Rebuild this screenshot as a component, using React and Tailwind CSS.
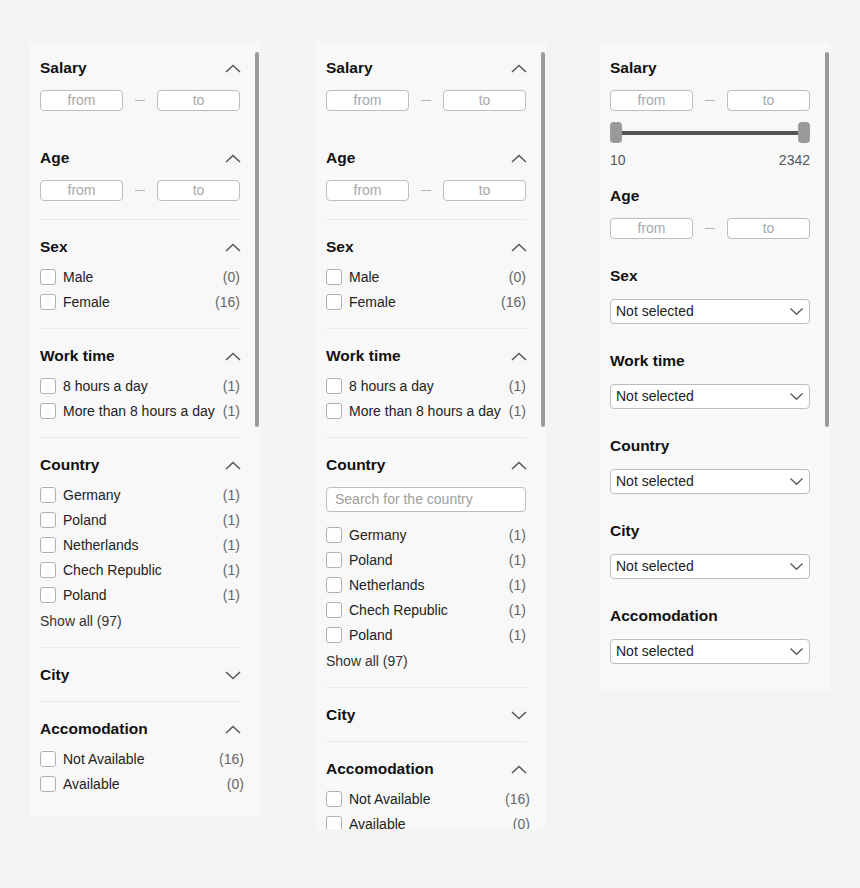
import React from "react";

const FONT = { fontFamily: '"Liberation Sans", Arial, sans-serif' };

function Chevron({ up = true }) {
  return (
    <svg width="16" height="9" viewBox="0 0 16 9" className="mr-[-1px]">
      <polyline
        points={up ? "1,8 8,1.5 15,8" : "1,1 8,7.5 15,1"}
        fill="none"
        stroke="#555"
        strokeWidth="1.5"
      />
    </svg>
  );
}

function SmallChevron() {
  return (
    <svg width="13" height="7" viewBox="0 0 13 7">
      <polyline points="0.5,0.5 6.5,6.3 12.5,0.5" fill="none" stroke="#555" strokeWidth="1.3" />
    </svg>
  );
}

function Scrollbar() {
  return <div className="absolute left-[225px] top-[10px] h-[375px] w-[4px] rounded-full bg-[#9a9a9a]" />;
}

function RangeInputs() {
  return (
    <div className="flex items-center justify-between">
      <div className="flex h-[21px] w-[83px] items-center justify-center rounded-[4px] border border-[#bdbdbd] bg-white text-[14px] text-[#a8a8a8]">
        from
      </div>
      <div className="h-px w-[10px] bg-[#b5b5b5]" />
      <div className="flex h-[21px] w-[83px] items-center justify-center rounded-[4px] border border-[#bdbdbd] bg-white text-[14px] text-[#a8a8a8]">
        to
      </div>
    </div>
  );
}

function Checkbox() {
  return <div className="h-4 w-4 shrink-0 rounded-[3px] border border-[#b0b0b0] bg-white" />;
}

function CheckList({ items, showAll = false, wide = false }) {
  return (
    <div className={`flex flex-col gap-[9px] ${wide ? "mr-[-4px]" : ""}`}>
      {items.map(([label, count], i) => (
        <div key={i} className="flex h-4 items-center">
          <Checkbox />
          <span className="ml-[7px] flex-1 text-[14px] leading-4 text-[#222]">{label}</span>
          <span className="text-[14px] leading-4 text-[#666]">({count})</span>
        </div>
      ))}
      {showAll && <div className="mt-[1px] h-4 text-[14px] leading-4 text-[#333]">Show all (97)</div>}
    </div>
  );
}

function Section({ title, open = true, first = false, border = true, invisible = false, children }) {
  const cls = [
    first ? "pt-4 pb-[19px]" : open ? "pt-[17px] pb-[18px]" : "pt-[17px] pb-4",
    border ? "border-b" : "",
    invisible ? "border-transparent" : "border-[#e8e8e8]",
  ].join(" ");
  return (
    <div className={cls}>
      <div className="flex h-5 items-center justify-between">
        <span className="text-[15.5px] font-bold leading-5 text-[#111]">{title}</span>
        <Chevron up={open} />
      </div>
      {open && <div className="mt-3">{children}</div>}
    </div>
  );
}

const countries = [
  ["Germany", 1],
  ["Poland", 1],
  ["Netherlands", 1],
  ["Chech Republic", 1],
  ["Poland", 1],
];

function Panel1({ search = false }) {
  return (
    <div
      className={`relative w-[230px] overflow-hidden bg-[#f8f8f8] pl-[10px] pr-5 ${
        search ? "h-[787px]" : "h-[775px]"
      }`}
    >
      <Scrollbar />
      <Section title="Salary" first invisible>
        <RangeInputs />
      </Section>
      <Section title="Age">
        <RangeInputs />
      </Section>
      <Section title="Sex">
        <CheckList items={[["Male", 0], ["Female", 16]]} />
      </Section>
      <Section title="Work time">
        <CheckList items={[["8 hours a day", 1], ["More than 8 hours a day", 1]]} />
      </Section>
      <Section title="Country">
        {search && (
          <div className="mb-[15px] flex h-[25px] items-center rounded-[4px] border border-[#bdbdbd] bg-white px-2 text-[14px] text-[#a0a0a0]">
            Search for the country
          </div>
        )}
        <CheckList items={countries} showAll />
      </Section>
      <Section title="City" open={false} />
      <Section title="Accomodation" border={false}>
        <CheckList items={[["Not Available", 16], ["Available", 0]]} wide />
      </Section>
    </div>
  );
}

function Select() {
  return (
    <div className="mt-[13px] flex h-[25px] items-center justify-between rounded-[4px] border border-[#bdbdbd] bg-white pl-[5px] pr-[6px] text-[14px] text-[#222]">
      <span>Not selected</span>
      <SmallChevron />
    </div>
  );
}

function Title({ children, className = "" }) {
  return <div className={`h-5 text-[15.5px] font-bold leading-5 text-[#111] ${className}`}>{children}</div>;
}

function Panel3() {
  return (
    <div className="relative h-[648px] w-[230px] bg-[#f8f8f8] pl-[10px] pr-5 pt-4">
      <Scrollbar />
      <Title>Salary</Title>
      <div className="mt-3">
        <RangeInputs />
      </div>
      <div className="mt-[11px] flex h-[21px] items-center">
        <div className="h-[21px] w-[12px] rounded-[4px] bg-[#9a9a9a]" />
        <div className="h-[4px] flex-1 bg-[#555]" />
        <div className="h-[21px] w-[12px] rounded-[4px] bg-[#9a9a9a]" />
      </div>
      <div className="mt-[9px] flex justify-between text-[14px] leading-4 text-[#555]">
        <span>10</span>
        <span>2342</span>
      </div>
      <Title className="mt-[18px]">Age</Title>
      <div className="mt-3">
        <RangeInputs />
      </div>
      <Title className="mt-[27px]">Sex</Title>
      <Select />
      <Title className="mt-[27px]">Work time</Title>
      <Select />
      <Title className="mt-[27px]">Country</Title>
      <Select />
      <Title className="mt-[27px]">City</Title>
      <Select />
      <Title className="mt-[27px]">Accomodation</Title>
      <Select />
    </div>
  );
}

export default function App() {
  return (
    <div className="min-h-[888px] w-[860px] bg-[#f4f4f4] pl-[30px] pt-[42px]" style={FONT}>
      <div className="flex items-start">
        <Panel1 />
        <div className="ml-[56px]">
          <Panel1 search />
        </div>
        <div className="ml-[54px]">
          <Panel3 />
        </div>
      </div>
    </div>
  );
}
